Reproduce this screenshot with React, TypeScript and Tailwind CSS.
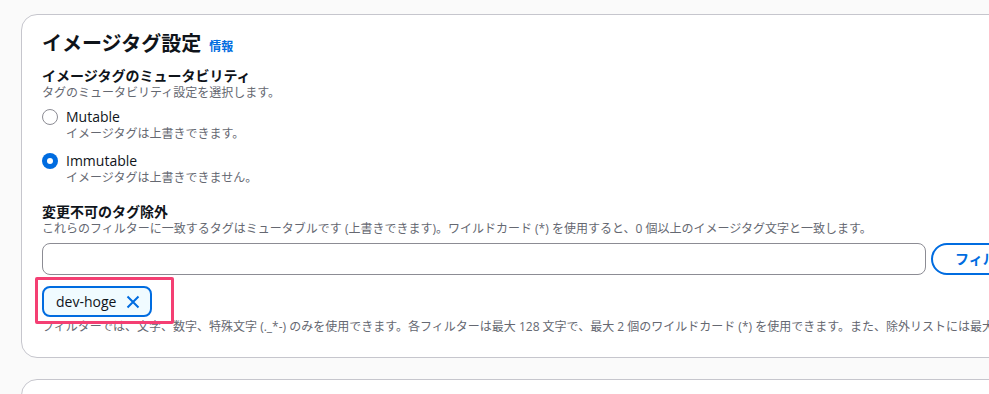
import React from "react";

const JP = "font-['Open_Sans','Noto_Sans_CJK_JP',sans-serif]";

function Radio({ checked }: { checked: boolean }) {
  return checked ? (
    <span className="flex h-[16px] w-[16px] items-center justify-center rounded-full bg-[#006ce0]">
      <span className="h-[6px] w-[6px] rounded-full bg-white" />
    </span>
  ) : (
    <span className="h-[16px] w-[16px] rounded-full border-[1.5px] border-[#8c8c94] bg-white" />
  );
}

function RadioOption({ checked, label, desc }: { checked: boolean; label: string; desc: string }) {
  return (
    <div className="flex gap-[8px]">
      <div className="flex h-[18px] items-center">
        <Radio checked={checked} />
      </div>
      <div className="flex flex-col">
        <div className="h-[18px] overflow-visible text-[14px] leading-[18px] text-[#0f141a]">{label}</div>
        <div className="h-[16px] overflow-visible text-[12px] leading-[16px] text-[#656871]">{desc}</div>
      </div>
    </div>
  );
}

export default function App() {
  return (
    <div className={`h-[394px] w-[989px] overflow-hidden bg-[#fafafa] ${JP}`}>
      <div className="pl-[21px] pt-[14px]">
        <div className="w-[1200px] rounded-[16px] border border-[#c6c6cd] bg-white pb-[22px] pl-[20px] pr-[20px] pt-[17px]">
          <div className="flex h-[24px] items-baseline gap-[8px]">
            <h2 className="text-[20px] font-bold leading-[24px] text-[#0f141a]">イメージタグ設定</h2>
            <span className="text-[12px] font-bold leading-[16px] text-[#006ce0]">情報</span>
          </div>

          <div className="mt-[10px] flex flex-col">
            <div className="h-[19px] text-[14px] font-bold leading-[19px] text-[#0f141a]">イメージタグのミュータビリティ</div>
            <div className="h-[16px] text-[12px] leading-[16px] text-[#656871]">タグのミュータビリティ設定を選択します。</div>
          </div>

          <div className="mt-[7px] flex flex-col gap-[10px]">
            <RadioOption checked={false} label="Mutable" desc="イメージタグは上書きできます。" />
            <RadioOption checked={true} label="Immutable" desc="イメージタグは上書きできません。" />
          </div>

          <div className="mt-[17px] flex flex-col">
            <div className="h-[18px] text-[14px] font-bold leading-[18px] text-[#0f141a]">変更不可のタグ除外</div>
            <div className="h-[16px] whitespace-nowrap text-[12px] leading-[16px] text-[#656871]">
              これらのフィルターに一致するタグはミュータブルです (上書きできます)。ワイルドカード (*) を使用すると、0 個以上のイメージタグ文字と一致します。
            </div>
          </div>

          <div className="mt-[6px] flex gap-[5px]">
            <div className="h-[32px] w-[884px] rounded-[8px] border border-[#8c8c94] bg-white" />
            <button className="flex h-[32px] items-center rounded-full border-2 border-[#006ce0] px-[22px] text-[14px] font-bold leading-[18px] text-[#006ce0]">
              フィルターを追加
            </button>
          </div>

          <div className="relative mt-[11px] flex">
            <div className="flex h-[31px] items-center gap-[10px] rounded-[8px] border-2 border-[#006ce0] bg-[#f0fbff] pl-[12px] pr-[10px]">
              <span className="text-[14px] leading-[20px] text-[#0f141a]">dev-hoge</span>
              <svg width="14" height="14" viewBox="0 0 14 14" fill="none">
                <path d="M1.5 1.5L12.5 12.5M12.5 1.5L1.5 12.5" stroke="#006ce0" strokeWidth="2" />
              </svg>
            </div>
            <div className="absolute left-[-7px] top-[-9px] h-[47px] w-[139px] rounded-[2px] border-[3px] border-[#f43f73]" />
          </div>

          <div className="mt-[2px] h-[16px] whitespace-nowrap text-[12px] leading-[16px] text-[#656871]">
            フィルターでは、文字、数字、特殊文字 (._*-) のみを使用できます。各フィルターは最大 128 文字で、最大 2 個のワイルドカード (*) を使用できます。また、除外リストには最大 5 個のフィルターを含めることができます。
          </div>
        </div>

        <div className="mt-[21px] h-[60px] w-[1200px] rounded-[16px] border border-[#c6c6cd] bg-white" />
      </div>
    </div>
  );
}
